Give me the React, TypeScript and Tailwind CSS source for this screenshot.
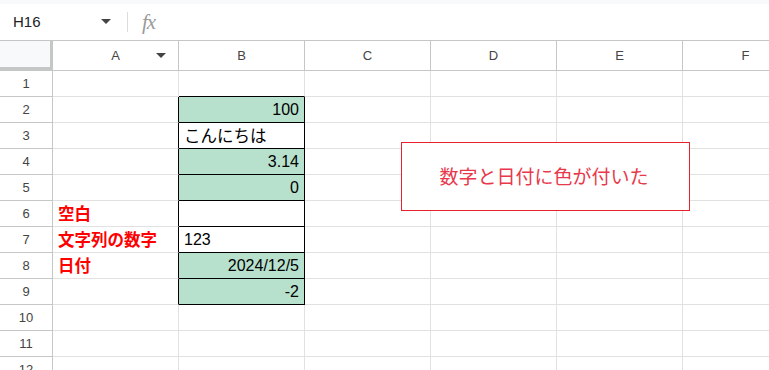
import React from 'react';

const cols = ['A', 'B', 'C', 'D', 'E', 'F'];

type Cell = { text: string; align?: 'left' | 'right'; fill?: boolean; red?: boolean; jp?: boolean };

const data: Record<number, Record<string, Cell>> = {
  2: { B: { text: '100', align: 'right', fill: true } },
  3: { B: { text: 'こんにちは', jp: true } },
  4: { B: { text: '3.14', align: 'right', fill: true } },
  5: { B: { text: '0', align: 'right', fill: true } },
  6: { A: { text: '空白', red: true }, B: { text: '' } },
  7: { A: { text: '文字列の数字', red: true }, B: { text: '123' } },
  8: { A: { text: '日付', red: true }, B: { text: '2024/12/5', align: 'right', fill: true } },
  9: { B: { text: '-2', align: 'right', fill: true } },
};

const inBox = (r: number) => r >= 2 && r <= 9;

export default function App() {
  const rows = Array.from({ length: 12 }, (_, i) => i + 1);
  return (
    <div className="w-[769px] h-[370px] overflow-hidden bg-white relative" style={{ fontFamily: '"Liberation Sans", Arial, sans-serif' }}>
      <div className="h-[4px] bg-[#f8f9fa]"></div>

      {/* formula bar */}
      <div className="h-[37px] flex items-center border-b border-[#c4c7c5]">
        <div className="w-[120px] pl-[13px] flex items-center justify-between pr-[9px]">
          <span className="text-[15px] text-[#202124]">H16</span>
          <svg width="10" height="6" viewBox="0 0 10 6"><path d="M0 0h10L5 5z" fill="#444" /></svg>
        </div>
        <div className="w-px h-[20px] bg-[#dadce0] ml-[7px]"></div>
        <span className="ml-[14px] text-[21px] italic text-[#9a9a9a] tracking-[-1px] leading-none" style={{ fontFamily: '"Liberation Serif", serif' }}>fx</span>
      </div>

      {/* column headers */}
      <div className="flex h-[30px]">
        <div className="w-[53px] shrink-0 bg-[#f8f9fa] border-r-[3px] border-b-[4px] border-[#c4c7c5]"></div>
        {cols.map((c) => (
          <div key={c} className="w-[126px] shrink-0 border-r border-b border-[#c4c7c5] relative flex items-center justify-center text-[13px] text-[#444]">
            {c}
            {c === 'A' && (
              <svg className="absolute right-[12px] top-[12px]" width="10" height="6" viewBox="0 0 10 6"><path d="M0 0h10L5 5z" fill="#444" /></svg>
            )}
          </div>
        ))}
      </div>

      {/* rows */}
      {rows.map((r) => (
        <div key={r} className="flex h-[26px]">
          <div className="w-[53px] shrink-0 border-r border-b border-[#c4c7c5] flex items-center justify-center text-[13px] text-[#444]">{r}</div>
          {cols.map((c) => {
            const cell = data[r]?.[c];
            const rightBlack = (c === 'A' || c === 'B') && inBox(r);
            const bottomBlack = c === 'B' && (r === 1 || inBox(r));
            return (
              <div
                key={c}
                className={
                  'w-[126px] shrink-0 border-r border-b flex items-center px-[5px] overflow-visible whitespace-nowrap ' +
                  (rightBlack ? 'border-r-black ' : 'border-r-[#e1e1e1] ') +
                  (bottomBlack ? 'border-b-black ' : 'border-b-[#e1e1e1] ') +
                  (cell?.fill ? 'bg-[#b7e1cd] ' : '') +
                  (cell?.align === 'right' ? 'justify-end' : 'justify-start')
                }
              >
                {cell && (
                  <span
                    className={
                      cell.red
                        ? 'text-[16.5px] font-bold text-[#ff0000] leading-none'
                        : cell.jp
                        ? 'text-[16.5px] text-black leading-none'
                        : 'text-[16px] text-black leading-none'
                    }
                    style={
                      cell.red || cell.jp
                        ? { fontFamily: '"Noto Sans CJK JP", "Liberation Sans", sans-serif' }
                        : undefined
                    }
                  >
                    {cell.text}
                  </span>
                )}
              </div>
            );
          })}
        </div>
      ))}

      {/* text box overlay */}
      <div className="absolute left-[401px] top-[142px] w-[289px] h-[69px] border border-[#e8202a] bg-white flex items-center justify-center pr-[3px]">
        <span className="text-[19px] text-[#e8394c]" style={{ fontFamily: '"Noto Sans CJK JP", sans-serif' }}>
          数字と日付に色が付いた
        </span>
      </div>
    </div>
  );
}
